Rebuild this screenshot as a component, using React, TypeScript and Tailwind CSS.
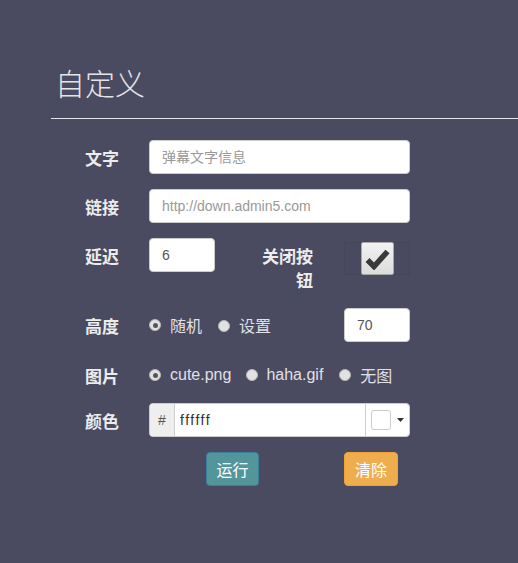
import React from "react";

function Radio({ checked }: { checked?: boolean }) {
  return (
    <span className="relative inline-flex h-[12px] w-[12px] shrink-0 items-center justify-center rounded-full border border-[#b8b8b8] bg-[#e2e2e2]">
      {checked && <span className="h-[5px] w-[5px] rounded-full bg-[#555]" />}
    </span>
  );
}

function Label({ children }: { children: React.ReactNode }) {
  return (
    <div className="w-[64px] shrink-0 pt-[6px] text-[17px] font-bold leading-[24px] text-[#ececec]">
      {children}
    </div>
  );
}

const inputCls =
  "h-[34px] rounded-[4px] border border-[#ccc] bg-white px-[12px] text-[14px] text-[#555] placeholder:text-[#999] outline-none font-['Liberation_Sans','Noto_Sans_CJK_SC',sans-serif]";

export default function App() {
  return (
    <div className="min-h-[563px] w-full overflow-hidden bg-[#4a4a60] font-['Noto_Sans_CJK_SC',sans-serif]">
      <div className="pl-[51px]">
        <div className="border-b border-[#e4e4e8] pt-[66px] pb-[19px]">
          <h1 className="pl-[4px] text-[30px] font-light leading-[33px] text-[#e4e4e8]">自定义</h1>
        </div>

        <div className="flex flex-col pl-[34px] pt-[21px]">
          {/* 文字 */}
          <div className="flex items-start">
            <Label>文字</Label>
            <input className={`${inputCls} w-[261px]`} placeholder="弹幕文字信息" />
          </div>

          {/* 链接 */}
          <div className="mt-[15px] flex items-start">
            <Label>链接</Label>
            <input className={`${inputCls} w-[261px]`} placeholder="http://down.admin5.com" />
          </div>

          {/* 延迟 / 关闭按钮 */}
          <div className="mt-[15px] flex items-start">
            <Label>延迟</Label>
            <input className={`${inputCls} w-[66px]`} defaultValue="6" />
            <div className="ml-[44px] w-[54px] pt-[6px] text-right text-[17px] font-bold leading-[24px] text-[#ececec]">
              关闭按钮
            </div>
            <div className="ml-[31px] mt-[4px] flex h-[33px] w-[66px] items-center justify-center border border-[#46465b] bg-[#49495f]">
              <span className="flex h-[33px] w-[33px] items-center justify-center rounded-[2px] border border-[#a8a8a8] bg-gradient-to-b from-[#f2f2f2] to-[#dcdcdc]">
                <svg width="25" height="22" viewBox="0 0 25 22">
                  <path d="M2.5 12 L9 18.5 L22.5 3.5" fill="none" stroke="#3a3a3a" strokeWidth="5.5" strokeLinejoin="miter" />
                </svg>
              </span>
            </div>
          </div>

          {/* 高度 */}
          <div className="mt-[16px] flex items-start">
            <Label>高度</Label>
            <div className="flex h-[34px] w-[195px] items-center text-[16px] text-[#e0e0e6]">
              <Radio checked />
              <span className="ml-[9px]">随机</span>
              <span className="ml-[16px]">
                <Radio />
              </span>
              <span className="ml-[9px]">设置</span>
            </div>
            <input className={`${inputCls} w-[66px]`} defaultValue="70" />
          </div>

          {/* 图片 */}
          <div className="mt-[16px] flex items-start">
            <Label>图片</Label>
            <div className="flex h-[34px] items-center text-[16px] text-[#e0e0e6] font-['Liberation_Sans','Noto_Sans_CJK_SC',sans-serif]">
              <Radio checked />
              <span className="ml-[9px]">cute.png</span>
              <span className="ml-[15px] flex">
                <Radio />
              </span>
              <span className="ml-[8px]">haha.gif</span>
              <span className="ml-[16px] flex">
                <Radio />
              </span>
              <span className="ml-[9px] font-['Noto_Sans_CJK_SC',sans-serif]">无图</span>
            </div>
          </div>

          {/* 颜色 */}
          <div className="mt-[11px] flex items-start">
            <Label>颜色</Label>
            <div className="flex h-[34px] w-[261px] overflow-hidden rounded-[4px] border border-[#ccc] bg-white font-['Liberation_Sans',sans-serif]">
              <div className="flex w-[25px] items-center justify-center border-r border-[#ccc] bg-[#eee] text-[14px] text-[#555]">
                #
              </div>
              <div className="flex flex-1 items-center pl-[5px] text-[14px] tracking-[1.5px] text-[#333]">ffffff</div>
              <div className="flex w-[44px] items-center border-l border-[#ccc] pl-[5px]">
                <span className="h-[20px] w-[20px] rounded-[3px] border border-[#ccc] bg-white" />
                <svg className="ml-[6px]" width="7" height="4" viewBox="0 0 7 4">
                  <path d="M0 0 L7 0 L3.5 4 Z" fill="#333" />
                </svg>
              </div>
            </div>
          </div>

          {/* Buttons */}
          <div className="mt-[15px] flex">
            <button className="ml-[121px] h-[34px] w-[53px] rounded-[4px] border border-[#3a7f9e] bg-[#52969c] text-[16px] text-white">
              运行
            </button>
            <button className="ml-[85px] h-[34px] w-[54px] rounded-[4px] border border-[#eea236] bg-[#f0ad4e] text-[16px] text-white">
              清除
            </button>
          </div>
        </div>
      </div>
    </div>
  );
}
